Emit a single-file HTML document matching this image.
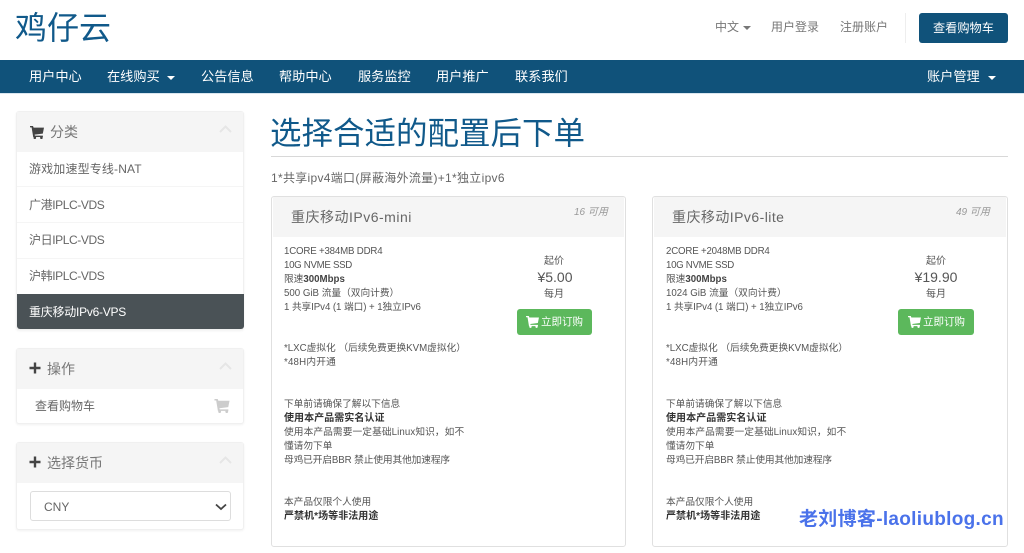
<!DOCTYPE html>
<html lang="zh"><head><meta charset="utf-8"><title>鸡仔云</title>
<style>
*{box-sizing:border-box}
html,body{margin:0;padding:0}
html{background:#fff}
body{width:1024px;height:553px;overflow:hidden;background:#fff;position:relative;font-family:"Liberation Sans","Noto Sans CJK SC",sans-serif;color:#555;filter:blur(.3px)}
.t{position:absolute;white-space:nowrap}
.box{position:absolute}
.nav{color:#fff;font-size:13.2px;line-height:20px;top:67px}
.top{font-size:12px;line-height:18px;color:#777}
.car{width:0;height:0;border-left:4px solid transparent;border-right:4px solid transparent;border-top:4px solid #fff;position:absolute}
.panel{position:absolute;left:16px;width:228px;background:#fff;border:1px solid #f0f0f0;border-radius:3px;box-shadow:0 1px 2px rgba(0,0,0,.06)}
.ph{position:absolute;left:0;top:0;right:0;height:40px;background:#f5f5f5}
.ptxt{font-size:14px;line-height:20px;color:#777}
.item{font-size:12px;line-height:18px;color:#666}
.sep{position:absolute;left:17px;width:226px;height:1px;background:#f5f5f5}
.card{position:absolute;top:196px;height:351px;background:#fff;border:1px solid #e0e0e0;border-radius:3px}
.card .h{position:absolute;left:1px;top:0;right:1px;height:40px;background:#f5f5f5}
.l{font-size:9.7px;line-height:14px;color:#555}
.b{font-weight:bold;color:#333;font-size:10px;letter-spacing:.05px}
.btn{position:absolute;background:#5cb85c;border-radius:3px;height:26px}
</style></head><body>
<div class="t" style="left:15px;top:8px;font-size:32px;line-height:40px;color:#10598a">鸡仔云</div>
<div class="t top" style="left:715px;top:18px">中文</div>
<div class="car" style="left:743px;top:26px;border-top-color:#777"></div>
<div class="t top" style="left:771px;top:18px">用户登录</div>
<div class="t top" style="left:840px;top:18px">注册账户</div>
<div class="box" style="left:905px;top:13px;width:1px;height:30px;background:#eee"></div>
<div class="box" style="left:919px;top:13px;width:89px;height:30px;background:#10527a;border-radius:3px"></div>
<div class="t" style="left:933px;top:19px;font-size:12.2px;line-height:18px;color:#fff">查看购物车</div>

<div class="box" style="left:0;top:60px;width:1024px;height:33px;background:#10527a"></div>
<div class="box" style="left:0;top:93px;width:1024px;height:1px;background:#d9e6ef"></div>
<div class="t nav" style="left:29px">用户中心</div>
<div class="t nav" style="left:107px">在线购买</div>
<div class="car" style="left:167px;top:76px"></div>
<div class="t nav" style="left:201px">公告信息</div>
<div class="t nav" style="left:279px">帮助中心</div>
<div class="t nav" style="left:358px">服务监控</div>
<div class="t nav" style="left:436px">用户推广</div>
<div class="t nav" style="left:515px">联系我们</div>
<div class="t nav" style="left:927px">账户管理</div>
<div class="car" style="left:988px;top:76px"></div>

<!-- sidebar 1 -->
<div class="panel" style="top:111px;height:219px"><div class="ph"></div></div>
<svg class="box" style="left:30px;top:126px" width="14" height="13" viewBox="0 0 14 13"><path d="M0 0h3l.6 1.600H14l-1.200 6-8.200 1 .3 1h8v1.400H3.200L1.600 1.400H0z" fill="#444"/><circle cx="4.800" cy="11.700" r="1.300" fill="#444"/><circle cx="11.400" cy="11.700" r="1.300" fill="#444"/></svg>
<div class="t ptxt" style="left:50px;top:122px">分类</div>
<svg class="box" style="left:219px;top:125px" width="13" height="8" viewBox="0 0 13 8"><path d="M1 7l5.500-5.500L12 7" fill="none" stroke="#e6e6e6" stroke-width="2"/></svg>
<div class="t item" style="left:29px;top:160px;letter-spacing:.15px">游戏加速型专线-NAT</div>
<div class="sep" style="top:186px"></div>
<div class="t item" style="left:29px;top:196px;letter-spacing:-.4px">广港IPLC-VDS</div>
<div class="sep" style="top:222px"></div>
<div class="t item" style="left:29px;top:231px;letter-spacing:-.4px">沪日IPLC-VDS</div>
<div class="sep" style="top:258px"></div>
<div class="t item" style="left:29px;top:267px;letter-spacing:-.4px">沪韩IPLC-VDS</div>
<div class="box" style="left:17px;top:294px;width:227px;height:35px;background:#4a5256;border-radius:0 0 3px 3px"></div>
<div class="t item" style="left:29px;top:303px;color:#fff;letter-spacing:-.25px">重庆移动IPv6-VPS</div>

<!-- sidebar 2 -->
<div class="panel" style="top:348px;height:76px"><div class="ph"></div></div>
<svg class="box" style="left:29px;top:362px" width="12" height="12" viewBox="0 0 12 12"><path d="M4.800 .5h2.400v4.300h4.300v2.400H7.200v4.300H4.800V7.200H.5V4.800h4.300z" fill="#444"/></svg>
<div class="t ptxt" style="left:47px;top:359px">操作</div>
<svg class="box" style="left:219px;top:362px" width="13" height="8" viewBox="0 0 13 8"><path d="M1 7l5.500-5.500L12 7" fill="none" stroke="#e6e6e6" stroke-width="2"/></svg>
<div class="t item" style="left:35px;top:397px">查看购物车</div>
<svg class="box" style="left:214px;top:399px" width="16" height="14" viewBox="0 0 14 13"><path d="M0 0h3l.6 1.600H14l-1.200 6-8.200 1 .3 1h8v1.400H3.200L1.600 1.400H0z" fill="#ccc"/><circle cx="4.800" cy="11.700" r="1.300" fill="#ccc"/><circle cx="11.400" cy="11.700" r="1.300" fill="#ccc"/></svg>

<!-- sidebar 3 -->
<div class="panel" style="top:442px;height:88px"><div class="ph"></div></div>
<svg class="box" style="left:29px;top:456px" width="12" height="12" viewBox="0 0 12 12"><path d="M4.800 .5h2.400v4.300h4.300v2.400H7.200v4.300H4.800V7.200H.5V4.800h4.300z" fill="#444"/></svg>
<div class="t ptxt" style="left:47px;top:453px">选择货币</div>
<svg class="box" style="left:219px;top:456px" width="13" height="8" viewBox="0 0 13 8"><path d="M1 7l5.500-5.500L12 7" fill="none" stroke="#e6e6e6" stroke-width="2"/></svg>
<div class="box" style="left:30px;top:491px;width:201px;height:30px;background:#fff;border:1px solid #ddd;border-radius:3px"></div>
<div class="t" style="left:44px;top:499px;font-size:12px;line-height:17px;color:#666">CNY</div>
<svg class="box" style="left:215px;top:503px" width="12" height="8" viewBox="0 0 12 8"><path d="M1 1.500l5 4.500 5-4.500" fill="none" stroke="#444" stroke-width="1.800"/></svg>

<!-- main -->
<div class="t" style="left:270px;top:112px;font-size:31.5px;line-height:42px;color:#10598a">选择合适的配置后下单</div>
<div class="box" style="left:271px;top:156px;width:737px;height:1px;background:#d8d8d8"></div>
<div class="t" style="left:271px;top:169px;font-size:12px;line-height:18px;color:#666;letter-spacing:.3px">1*共享ipv4端口(屏蔽海外流量)+1*独立ipv6</div>

<!-- card 1 -->
<div class="card" style="left:271px;width:355px"><div class="h"></div></div>
<div class="t" style="left:291px;top:207px;font-size:14px;line-height:20px;color:#666;letter-spacing:.5px">重庆移动IPv6-mini</div>
<div class="t" style="left:574px;top:206px;font-size:10px;line-height:14px;color:#999;font-style:italic">16 可用</div>
<div class="t l" style="left:284px;top:245px;letter-spacing:-.18px">1CORE +384MB DDR4</div>
<div class="t l" style="left:284px;top:259px;letter-spacing:-.3px">10G NVME SSD</div>
<div class="t l" style="left:284px;top:273px">限速<b style="color:#444">300Mbps</b></div>
<div class="t l" style="left:284px;top:287px">500 GiB 流量（双向计费）</div>
<div class="t l" style="left:284px;top:301px;letter-spacing:-.07px">1 共享IPv4 (1 端口) + 1独立IPv6</div>
<div class="t l" style="left:284px;top:342px">*LXC虚拟化 （后续免费更换KVM虚拟化）</div>
<div class="t l" style="left:284px;top:356px;letter-spacing:.2px">*48H内开通</div>
<div class="t l" style="left:284px;top:398px">下单前请确保了解以下信息</div>
<div class="t l b" style="left:284px;top:412px">使用本产品需实名认证</div>
<div class="t l" style="left:284px;top:426px;letter-spacing:.1px">使用本产品需要一定基础Linux知识，如不</div>
<div class="t l" style="left:284px;top:440px">懂请勿下单</div>
<div class="t l" style="left:284px;top:454px;letter-spacing:-.1px">母鸡已开启BBR 禁止使用其他加速程序</div>
<div class="t l" style="left:284px;top:496px">本产品仅限个人使用</div>
<div class="t l b" style="left:284px;top:510px">严禁机*场等非法用途</div>
<div class="t" style="left:493px;width:122px;text-align:center;top:255px;font-size:10px;line-height:14px;color:#555">起价</div>
<div class="t" style="left:494px;width:122px;text-align:center;top:267px;font-size:14px;line-height:20px;color:#555">¥5.00</div>
<div class="t" style="left:493px;width:122px;text-align:center;top:288px;font-size:10px;line-height:14px;color:#555">每月</div>
<div class="btn" style="left:517px;top:309px;width:75px"></div>
<svg class="box" style="left:526px;top:316px" width="13" height="12" viewBox="0 0 14 13"><path d="M0 0h3l.6 1.600H14l-1.200 6-8.200 1 .3 1h8v1.400H3.200L1.600 1.400H0z" fill="#fff"/><circle cx="4.800" cy="11.700" r="1.300" fill="#fff"/><circle cx="11.400" cy="11.700" r="1.300" fill="#fff"/></svg>
<div class="t" style="left:541px;top:314px;font-size:10.5px;line-height:16px;color:#fff">立即订购</div>

<!-- card 2 -->
<div class="card" style="left:652px;width:356px"><div class="h"></div></div>
<div class="t" style="left:672px;top:207px;font-size:14px;line-height:20px;color:#666;letter-spacing:.45px">重庆移动IPv6-lite</div>
<div class="t" style="left:956px;top:206px;font-size:10px;line-height:14px;color:#999;font-style:italic">49 可用</div>
<div class="t l" style="left:666px;top:245px;letter-spacing:-.18px">2CORE +2048MB DDR4</div>
<div class="t l" style="left:666px;top:259px;letter-spacing:-.3px">10G NVME SSD</div>
<div class="t l" style="left:666px;top:273px">限速<b style="color:#444">300Mbps</b></div>
<div class="t l" style="left:666px;top:287px">1024 GiB 流量（双向计费）</div>
<div class="t l" style="left:666px;top:301px;letter-spacing:-.07px">1 共享IPv4 (1 端口) + 1独立IPv6</div>
<div class="t l" style="left:666px;top:342px">*LXC虚拟化 （后续免费更换KVM虚拟化）</div>
<div class="t l" style="left:666px;top:356px;letter-spacing:.2px">*48H内开通</div>
<div class="t l" style="left:666px;top:398px">下单前请确保了解以下信息</div>
<div class="t l b" style="left:666px;top:412px">使用本产品需实名认证</div>
<div class="t l" style="left:666px;top:426px;letter-spacing:.1px">使用本产品需要一定基础Linux知识，如不</div>
<div class="t l" style="left:666px;top:440px">懂请勿下单</div>
<div class="t l" style="left:666px;top:454px;letter-spacing:-.1px">母鸡已开启BBR 禁止使用其他加速程序</div>
<div class="t l" style="left:666px;top:496px">本产品仅限个人使用</div>
<div class="t l b" style="left:666px;top:510px">严禁机*场等非法用途</div>
<div class="t" style="left:875px;width:122px;text-align:center;top:255px;font-size:10px;line-height:14px;color:#555">起价</div>
<div class="t" style="left:875px;width:122px;text-align:center;top:267px;font-size:14px;line-height:20px;color:#555">¥19.90</div>
<div class="t" style="left:875px;width:122px;text-align:center;top:288px;font-size:10px;line-height:14px;color:#555">每月</div>
<div class="btn" style="left:898px;top:309px;width:76px"></div>
<svg class="box" style="left:908px;top:316px" width="13" height="12" viewBox="0 0 14 13"><path d="M0 0h3l.6 1.600H14l-1.200 6-8.200 1 .3 1h8v1.400H3.200L1.600 1.400H0z" fill="#fff"/><circle cx="4.800" cy="11.700" r="1.300" fill="#fff"/><circle cx="11.400" cy="11.700" r="1.300" fill="#fff"/></svg>
<div class="t" style="left:923px;top:314px;font-size:10.5px;line-height:16px;color:#fff">立即订购</div>

<div class="t" style="left:799px;top:509px;font-size:19px;line-height:21px;font-weight:bold;color:#4a72ea;letter-spacing:.3px">老刘博客-laoliublog.cn</div>
</body></html>
